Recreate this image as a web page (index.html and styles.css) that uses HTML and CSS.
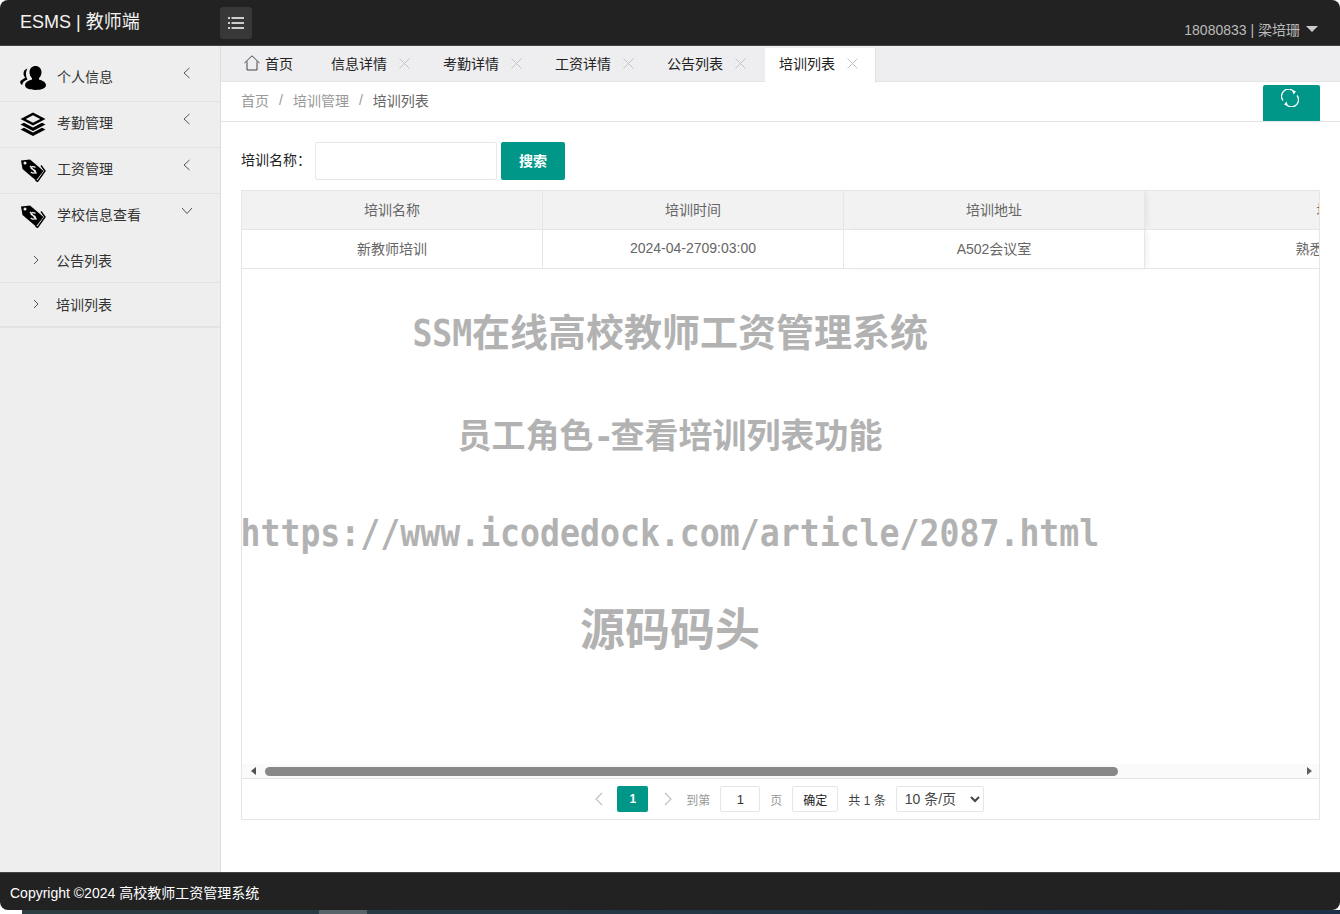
FILE: index.html
```html
<!DOCTYPE html>
<html lang="zh-CN">
<head>
  <meta charset="UTF-8" />
  <title>ESMS | 教师端</title>
  <link rel="stylesheet" href="styles.css">
</head>
<body>

  <div class="window">
    <header class="topbar">
      <div class="brand">ESMS | 教师端</div>
      <button class="menu-toggle">
        <svg width="16" height="12" viewBox="0 0 16 12"><path d="M0 1h2M3.500 1H16M0 6h2M3.500 6H16M0 11h2M3.500 11H16" stroke="#fff" stroke-width="1.500"/></svg>
      </button>
      <div class="user">18080833 | 梁培珊 <span class="caret"></span></div>
    </header>

    <div class="middle">
      <aside class="sidebar">
        <div class="nav-item">
          <svg class="nav-icon" viewBox="0 0 26 24"><path d="M15.500 0c3.500 0 6 2.700 6 6.200 0 2.500-1 4.500-2.500 5.800v1.400c3.200 1 7 2.400 7 5.900 0 3-4.500 4.700-10.500 4.700S5 22.300 5 19.300c0-3.500 3.800-4.900 7-5.900V12C10.500 10.700 9.500 8.700 9.500 6.200 9.500 2.700 12 0 15.500 0z"/><path d="M7.500 2.500C5 3 3.500 5 3.500 7.500c0 1.600.6 3 1.700 4-.1 1-3.500 1.800-4.700 3.600-.9 1.400.1 3 1.700 3.900.3-2.400 2-4.200 5.300-5.500-1.800-2.700-2.200-7.500 0-11z"/></svg>
          <span class="nav-label">个人信息</span>
          <svg class="chev" viewBox="0 0 10 12"><path d="M7.500 1 2 6l5.500 5"/></svg>
        </div>
        <div class="nav-item">
          <svg class="nav-icon" viewBox="0 0 26 24"><path d="M13 .5 25.500 7 13 13.500.5 7zM13 3.200 5.800 7 13 10.800 20.200 7z" fill-rule="evenodd"/><path d="M4 10.800.5 12.500 13 19l12.500-6.500-3.500-1.700-9 4.700z"/><path d="M4 15.800.5 17.500 13 24l12.500-6.500-3.500-1.700-9 4.700z"/></svg>
          <span class="nav-label">考勤管理</span>
          <svg class="chev" viewBox="0 0 10 12"><path d="M7.500 1 2 6l5.500 5"/></svg>
        </div>
        <div class="nav-item">
          <svg class="nav-icon" viewBox="0 0 26 24"><path d="M1 2.500 10 1.500 23.500 13 16 22.500 2.500 11z"/><path d="M21 7.500 25 13 17.500 23.500l-2-1.500" fill="none" stroke="#000" stroke-width="1.400"/><circle cx="5" cy="5" r="1.500" fill="#eee"/><path d="M15.500 9.500c-2-1.500-4.500-1-4.500.5s4.500 1.500 4.500 3.500-2.800 2-4.700.5M10 8l6.500 7.500" fill="none" stroke="#eee" stroke-width="1.300"/></svg>
          <span class="nav-label">工资管理</span>
          <svg class="chev" viewBox="0 0 10 12"><path d="M7.500 1 2 6l5.500 5"/></svg>
        </div>
        <div class="nav-item open">
          <svg class="nav-icon" viewBox="0 0 26 24"><path d="M1 2.500 10 1.500 23.500 13 16 22.500 2.500 11z"/><path d="M21 7.500 25 13 17.500 23.500l-2-1.500" fill="none" stroke="#000" stroke-width="1.400"/><circle cx="5" cy="5" r="1.500" fill="#eee"/><path d="M15.500 9.500c-2-1.500-4.500-1-4.500.5s4.500 1.500 4.500 3.500-2.800 2-4.700.5M10 8l6.500 7.500" fill="none" stroke="#eee" stroke-width="1.300"/></svg>
          <span class="nav-label">学校信息查看</span>
          <svg class="chev chev-down" viewBox="0 0 12 10"><path d="M1 2l5 5.500L11 2"/></svg>
        </div>
        <div class="sub-item">
          <svg class="sub-chev" viewBox="0 0 6 10"><path d="M1 1l4 4-4 4"/></svg>
          <span>公告列表</span>
        </div>
        <div class="sub-item last">
          <svg class="sub-chev" viewBox="0 0 6 10"><path d="M1 1l4 4-4 4"/></svg>
          <span>培训列表</span>
        </div>
      </aside>

      <main class="content">
        <nav class="tabs">
          <div class="tab home">
            <svg width="16" height="16" viewBox="0 0 16 16"><path d="M.5 8 8 .8 15.500 8M3 6.500V15h10V6.500" fill="none" stroke="#444" stroke-width="1"/></svg>
            <span>首页</span>
          </div>
          <div class="tab">信息详情<svg class="close" viewBox="0 0 11 11"><path d="M.5.500l10 10M10.500.500l-10 10"/></svg></div>
          <div class="tab">考勤详情<svg class="close" viewBox="0 0 11 11"><path d="M.5.500l10 10M10.500.500l-10 10"/></svg></div>
          <div class="tab">工资详情<svg class="close" viewBox="0 0 11 11"><path d="M.5.500l10 10M10.500.500l-10 10"/></svg></div>
          <div class="tab">公告列表<svg class="close" viewBox="0 0 11 11"><path d="M.5.500l10 10M10.500.500l-10 10"/></svg></div>
          <div class="tab active">培训列表<svg class="close" viewBox="0 0 11 11"><path d="M.5.500l10 10M10.500.500l-10 10"/></svg></div>
        </nav>

        <div class="crumbs">
          <span>首页</span><i>/</i><span>培训管理</span><i>/</i><span class="here">培训列表</span>
          <button class="refresh">
            <svg width="18" height="18" viewBox="0 0 18 18"><path d="M2 11.500A7 7 0 0 1 13 2.800M16 6.500A7 7 0 0 1 5 15.200" fill="none" stroke="#fff" stroke-width="1.300"/><path d="M11 .8 15 2.500 12.500 5.500zM7 17.200 3 15.500 5.500 12.500z" fill="#fff"/></svg>
          </button>
        </div>

        <div class="panel">
          <form class="search">
            <label>培训名称：</label>
            <input type="text" />
            <button type="button" class="btn">搜索</button>
          </form>

          <div class="grid-box">
            <div class="grid-scroll">
              <table class="grid">
                <colgroup>
                  <col class="c-name"><col class="c-name"><col class="c-name"><col class="c-wide">
                </colgroup>
                <thead>
                  <tr><th>培训名称</th><th>培训时间</th><th class="fixed-end">培训地址</th><th>培训的内容</th></tr>
                </thead>
                <tbody>
                  <tr><td>新教师培训</td><td>2024-04-2709:03:00</td><td class="fixed-end">A502会议室</td><td>熟悉学校规章制度</td></tr>
                </tbody>
              </table>
            </div>

            <div class="hscroll">
              <span class="arrow left"></span>
              <div class="track"><div class="thumb"></div></div>
              <span class="arrow right"></span>
            </div>

            <div class="pager">
              <svg class="pg-arrow" viewBox="0 0 10 14"><path d="M8 1 2 7l6 6"/></svg>
              <span class="pg-num">1</span>
              <svg class="pg-arrow" viewBox="0 0 10 14"><path d="M2 1l6 6-6 6"/></svg>
              <span class="pg-muted">到第</span>
              <input class="pg-input" type="text" value="1" />
              <span class="pg-muted page-unit">页</span>
              <button type="button" class="pg-ok">确定</button>
              <span class="pg-total">共 1 条</span>
              <select class="pg-size"><option>10 条/页</option></select>
            </div>
          </div>
        </div>
      </main>
    </div>

    <footer class="footer">Copyright ©2024 高校教师工资管理系统</footer>
  </div>

  <div class="taskbar"><span class="task-light"></span></div>

  <div class="watermark">
    <p class="wm-title"><span class="wm-ssm">SSM</span>在线高校教师工资管理系统</p>
    <p class="wm-sub">员工角色<span class="wm-dash">-</span>查看培训列表功能</p>
    <p class="wm-url"><span>https://www.icodedock.com/article/2087.html</span></p>
    <p class="wm-name">源码码头</p>
  </div>

</body>
</html>
```

FILE: styles.css
```css
* { margin: 0; padding: 0; box-sizing: border-box; }

html, body { height: 100%; }

body {
  position: relative;
  height: 914px;
  overflow: hidden;
  background: #fff;
  color: #333;
  font-family: "Liberation Sans", "Noto Sans CJK SC", sans-serif;
  font-size: 14px;
  display: flex;
  flex-direction: column;
}

.window {
  height: 910px;
  flex: none;
  display: flex;
  flex-direction: column;
}

/* top bar */
.topbar {
  height: 46px;
  flex: none;
  background: #222;
  border-bottom: 1px solid #444;
  border-radius: 8px 8px 0 0;
  display: flex;
  align-items: center;
  color: #fff;
}

.brand {
  width: 220px;
  padding: 0 0 6px 20px;
  font-size: 18px;
  color: #f2f2f2;
}

.menu-toggle {
  width: 32px;
  height: 32px;
  margin-top: 1px;
  background: #383838;
  border: none;
  border-radius: 3px;
  display: flex;
  align-items: center;
  justify-content: center;
}

.user {
  margin-left: auto;
  margin-right: 22px;
  margin-top: 12px;
  font-size: 14px;
  color: #bbb;
  display: flex;
  align-items: center;
  gap: 6px;
}

.caret {
  border: 6px solid transparent;
  border-top: 6px solid #ccc;
  border-bottom: none;
  margin-top: 1px;
}

.middle {
  flex: 1;
  display: flex;
  min-height: 0;
}

/* sidebar */
.sidebar {
  width: 221px;
  flex: none;
  padding-top: 10px;
  background: #eee;
  border-right: 1px solid #ddd;
}

.nav-item {
  height: 46px;
  padding-left: 20px;
  display: flex;
  align-items: center;
  border-bottom: 1px solid #e3e3e3;
  color: #333;
  font-size: 14px;
}

.nav-item.open {
  height: 45px;
  border-bottom: none;
}

.nav-icon {
  width: 26px;
  height: 24px;
  margin-right: 11px;
  margin-top: -2px;
  flex: none;
}

.nav-label { flex: 1; margin-top: -5px; }

.chev {
  width: 10px;
  height: 12px;
  margin-right: 28px;
  margin-top: -12px;
  fill: none;
  stroke: #555;
  stroke-width: 1;
}

.chev-down { width: 12px; height: 10px; margin-right: 27px; }

.sub-item {
  height: 44px;
  padding-left: 33px;
  padding-bottom: 2px;
  display: flex;
  align-items: center;
  gap: 17px;
  font-size: 14px;
  color: #333;
  border-bottom: 1px solid #e3e3e3;
}

.sub-item.last {
  height: 45px;
  border-bottom: 2px solid #e3e3e3;
}

.sub-chev {
  width: 6px;
  height: 10px;
  fill: none;
  stroke: #555;
  stroke-width: 1;
}

/* main */
.content {
  flex: 1;
  min-width: 0;
  display: flex;
  flex-direction: column;
}

.tabs {
  height: 36px;
  flex: none;
  background: #eeeef0;
  border-bottom: 1px solid #e4e4e4;
  padding-top: 2px;
  display: flex;
  font-size: 14px;
}

.tab {
  width: 112px;
  height: 34px;
  padding: 0 0 4px 14px;
  display: flex;
  align-items: center;
  color: #222;
}

.tab.home {
  width: 96px;
  padding-left: 23px;
  gap: 5px;
}

.tab.active {
  width: 111px;
  height: 35px;
  padding-bottom: 5px;
  background: #fff;
  border-right: 1px solid #e4e4e4;
  position: relative;
  z-index: 1;
}

.close {
  width: 11px;
  height: 11px;
  margin-left: 12px;
  margin-top: 1px;
  fill: none;
  stroke: #c4c4c4;
  stroke-width: 1;
}

.crumbs {
  height: 40px;
  flex: none;
  padding-left: 20px;
  border-bottom: 1px solid #e4e4e4;
  display: flex;
  align-items: center;
  font-size: 14px;
  color: #999;
}

.crumbs span, .crumbs i { margin-top: -4px; }

.crumbs i {
  font-style: normal;
  margin-left: 10px;
  margin-right: 10px;
}

.crumbs .here { color: #666; }

.refresh {
  margin-left: auto;
  margin-right: 20px;
  width: 57px;
  height: 36px;
  align-self: flex-end;
  background: #009688;
  border: none;
  border-radius: 2px 2px 0 0;
  display: flex;
  align-items: flex-start;
  justify-content: center;
  padding: 4px 3px 0 0;
}

.panel {
  flex: 1;
  min-height: 0;
  padding: 20px 20px 0;
}

.search {
  display: flex;
  align-items: center;
  height: 38px;
  margin-bottom: 10px;
  font-size: 14px;
  color: #222;
}

.search label {
  width: 74px;
  white-space: nowrap;
  margin-top: -5px;
}

.search input {
  width: 182px;
  height: 38px;
  border: 1px solid #e6e6e6;
  border-radius: 2px;
  margin-right: 4px;
}

.btn {
  width: 64px;
  height: 38px;
  padding-bottom: 2px;
  background: #009688;
  color: #fff;
  border: none;
  border-radius: 2px;
  font: inherit;
  font-weight: bold;
}

/* data table */
.grid-box {
  height: 630px;
  border: 1px solid #e6e6e6;
  display: flex;
  flex-direction: column;
}

.grid-scroll {
  flex: 1;
  min-height: 0;
  overflow: hidden;
}

.grid {
  border-collapse: separate;
  border-spacing: 0;
  table-layout: fixed;
  width: 1317px;
  font-size: 14px;
  color: #666;
  text-align: center;
}

.c-name { width: 301px; }
.c-wide { width: 414px; }

.grid th, .grid td {
  height: 39px;
  padding-bottom: 2px;
  font-weight: normal;
  border-right: 1px solid #e6e6e6;
  border-bottom: 1px solid #e6e6e6;
  white-space: nowrap;
}

.grid th { background: #f2f2f2; }

.grid .fixed-end {
  position: relative;
  z-index: 1;
  box-shadow: 4px 0 6px -2px rgba(0, 0, 0, 0.07);
}

.hscroll {
  height: 14px;
  flex: none;
  background: #fafafa;
  display: flex;
  align-items: center;
}

.arrow {
  width: 0;
  height: 0;
  flex: none;
  border: 4px solid transparent;
}

.arrow.left { border-right: 5px solid #505050; border-left: none; margin-left: 9px; }
.arrow.right { border-left: 5px solid #606060; border-right: none; margin-right: 7px; }

.track {
  flex: 1;
  padding-left: 9px;
  height: 9px;
}

.thumb {
  width: 853px;
  height: 9px;
  background: #888;
  border-radius: 5px;
}

.pager {
  height: 41px;
  flex: none;
  padding-left: 17px;
  border-top: 1px solid #e6e6e6;
  display: flex;
  align-items: center;
  justify-content: center;
  font-size: 12px;
  color: #333;
}

.pg-arrow {
  width: 10px;
  height: 14px;
  fill: none;
  stroke: #c2c2c2;
  stroke-width: 1.2;
}

.pg-num {
  width: 31px;
  height: 26px;
  margin: 0 15px 0 13px;
  background: #009688;
  color: #fff;
  font-weight: bold;
  border-radius: 2px;
  display: flex;
  align-items: center;
  justify-content: center;
}

.pg-muted { color: #999; margin-left: 13px; }
.page-unit { margin-left: 10px; }

.pg-input {
  width: 40px;
  height: 26px;
  margin-left: 10px;
  border: 1px solid #e6e6e6;
  border-radius: 2px;
  text-align: center;
  font: inherit;
  font-size: 13px;
  color: #333;
}

.pg-ok {
  width: 46px;
  height: 26px;
  margin-left: 10px;
  background: #fff;
  border: 1px solid #e6e6e6;
  border-radius: 2px;
  font: inherit;
  font-size: 12px;
  color: #222;
}

.pg-total { margin-left: 10px; color: #444; }

.pg-size {
  width: 88px;
  height: 26px;
  margin-left: 10px;
  padding-left: 4px;
  background: #fff;
  border: 1px solid #e6e6e6;
  border-radius: 2px;
  font: inherit;
  font-size: 14px;
  color: #444;
}

.footer {
  height: 38px;
  flex: none;
  padding-left: 10px;
  background: #222;
  border-top: 1px solid #444;
  border-radius: 0 0 8px 8px;
  display: flex;
  align-items: center;
  font-size: 14px;
  color: #fff;
}

.taskbar {
  height: 4px;
  flex: none;
  margin-left: 22px;
  background: linear-gradient(90deg, #2c3e42, #1c3048);
  display: flex;
  padding-left: 297px;
}

.task-light {
  width: 48px;
  background: #586469;
}

/* watermark sits on top of the table */
.watermark {
  position: absolute;
  left: 0;
  right: 0;
  top: 0;
  padding-top: 309px;
  text-align: center;
  font-family: "DejaVu Sans Mono", "Noto Sans CJK SC", monospace;
  font-weight: bold;
  color: #b2b2b2;
  white-space: nowrap;
  pointer-events: none;
}

.wm-title { font-size: 38px; line-height: 48px; }
.wm-ssm { display: inline-block; margin: 0 -4.4px; transform: scaleX(0.87); }

.wm-sub { margin-top: 55px; font-size: 34px; line-height: 48px; }
.wm-dash { letter-spacing: -3.4px; }

.wm-url { margin-top: 49px; font-size: 38px; line-height: 48px; }
.wm-url span { display: inline-block; transform: scaleX(0.873); }

.wm-name { margin-top: 46px; font-size: 45px; line-height: 56px; }
```
